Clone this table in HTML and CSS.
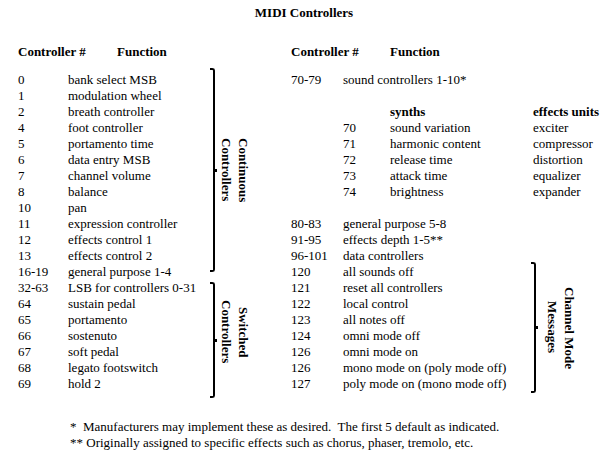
FILE: index.html
```html
<!DOCTYPE html>
<html>
<head>
<meta charset="utf-8">
<title>MIDI Controllers</title>
<link rel="stylesheet" href="styles.css">
</head>
<body>
<div class="page">
  <h1 class="title">MIDI Controllers</h1>
  <div class="tables">
    <section class="side side-left">
      <div class="head"><span class="hnum">Controller #</span><span>Function</span></div>
      <div class="grid lgrid">
        <div class="group g1">
          <div class="brace"><i class="cap-top"></i><i class="seg"></i><i class="tip"></i><i class="seg"></i><i class="cap-bot"></i></div>
          <div class="vlabel">Continuous<br>Controllers</div>
        </div>
        <div class="group g2">
          <div class="brace"><i class="cap-top"></i><i class="seg"></i><i class="tip"></i><i class="seg"></i><i class="cap-bot"></i></div>
          <div class="vlabel lab2">Switched<br>Controllers</div>
        </div>
        <span class="n">0</span><span class="f">bank select MSB</span>
        <span class="n">1</span><span class="f">modulation wheel</span>
        <span class="n">2</span><span class="f">breath controller</span>
        <span class="n">4</span><span class="f">foot controller</span>
        <span class="n">5</span><span class="f">portamento time</span>
        <span class="n">6</span><span class="f">data entry MSB</span>
        <span class="n">7</span><span class="f">channel volume</span>
        <span class="n">8</span><span class="f">balance</span>
        <span class="n">10</span><span class="f">pan</span>
        <span class="n">11</span><span class="f">expression controller</span>
        <span class="n">12</span><span class="f">effects control 1</span>
        <span class="n">13</span><span class="f">effects control 2</span>
        <span class="n">16-19</span><span class="f">general purpose 1-4</span>
        <span class="n">32-63</span><span class="f">LSB for controllers 0-31</span>
        <span class="n">64</span><span class="f">sustain pedal</span>
        <span class="n">65</span><span class="f">portamento</span>
        <span class="n">66</span><span class="f">sostenuto</span>
        <span class="n">67</span><span class="f">soft pedal</span>
        <span class="n">68</span><span class="f">legato footswitch</span>
        <span class="n">69</span><span class="f">hold 2</span>
      </div>
    </section>
    <section class="side side-right">
      <div class="head"><span class="hnum">Controller #</span><span>Function</span></div>
      <div class="grid rgrid">
        <div class="group g3">
          <div class="brace"><i class="cap-top"></i><i class="seg"></i><i class="tip"></i><i class="seg"></i><i class="cap-bot"></i></div>
          <div class="vlabel lab3">Channel Mode<br>Messages</div>
        </div>
        <span class="n">70-79</span><span class="f3">sound controllers 1-10*</span>
        <div class="blank"></div>
        <b class="c3">synths</b><b class="c4">effects units</b>
        <span class="c2">70</span><span class="c3">sound variation</span><span class="c4">exciter</span>
        <span class="c2">71</span><span class="c3">harmonic content</span><span class="c4">compressor</span>
        <span class="c2">72</span><span class="c3">release time</span><span class="c4">distortion</span>
        <span class="c2">73</span><span class="c3">attack time</span><span class="c4">equalizer</span>
        <span class="c2">74</span><span class="c3">brightness</span><span class="c4">expander</span>
        <div class="blank"></div>
        <span class="n">80-83</span><span class="f3">general purpose 5-8</span>
        <span class="n">91-95</span><span class="f3">effects depth 1-5**</span>
        <span class="n">96-101</span><span class="f3">data controllers</span>
        <span class="n">120</span><span class="f2">all sounds off</span>
        <span class="n">121</span><span class="f2">reset all controllers</span>
        <span class="n">122</span><span class="f2">local control</span>
        <span class="n">123</span><span class="f2">all notes off</span>
        <span class="n">124</span><span class="f2">omni mode off</span>
        <span class="n">126</span><span class="f2">omni mode on</span>
        <span class="n">126</span><span class="f2">mono mode on (poly mode off)</span>
        <span class="n">127</span><span class="f2">poly mode on (mono mode off)</span>
      </div>
    </section>
  </div>
  <div class="notes">
    <p>*  Manufacturers may implement these as desired.  The first 5 default as indicated.</p>
    <p>** Originally assigned to specific effects such as chorus, phaser, tremolo, etc.</p>
  </div>
</div>
</body>
</html>
```
FILE: styles.css
```css
html, body {
  margin: 0;
  padding: 0;
  background: #fff;
}

body {
  font-family: "Liberation Serif", "Times New Roman", serif;
  font-size: 13px;
  line-height: 16px;
  color: #000;
}

.page {
  width: 612px;
  padding-top: 5px;
}

.title {
  margin: 0;
  font-size: 13px;
  line-height: 16px;
  font-weight: bold;
  text-align: center;
  padding-right: 4px;
}

.tables {
  display: flex;
  margin-top: 23px;
}

.side-left {
  width: 273px;
  padding-left: 18px;
}

.side-right {
  flex: 1;
}

.head {
  display: flex;
  font-weight: bold;
  height: 16px;
  margin-bottom: 12px;
}

.hnum {
  width: 99px;
}

.grid {
  display: grid;
  grid-auto-rows: 16px;
  white-space: nowrap;
}

.lgrid {
  grid-template-columns: 50px 142px 8px 1fr;
}

.rgrid {
  grid-template-columns: 52px 47px 143px 1fr;
}

.lgrid .n { grid-column: 1; }
.lgrid .f { grid-column: 2; }

.rgrid .n { grid-column: 1; }
.rgrid .f3 { grid-column: 2 / span 3; }
.rgrid .f2 { grid-column: 2 / span 2; }
.rgrid .c2 { grid-column: 2; }
.rgrid .c3 { grid-column: 3; }
.rgrid .c4 { grid-column: 4; }
.rgrid .blank { grid-column: 1 / -1; }

.group {
  display: flex;
  align-items: center;
}

.g1 {
  grid-column: 3 / 5;
  grid-row: 1 / span 13;
  margin-top: -4px;
  margin-bottom: 8px;
}

.g2 {
  grid-column: 3 / 5;
  grid-row: 14 / span 7;
  margin-top: 2px;
  margin-bottom: -6px;
}

.g3 {
  grid-column: 4;
  grid-row: 13 / span 8;
  margin-top: -2px;
  margin-bottom: -1px;
  margin-left: -2px;
}

.brace {
  align-self: stretch;
  display: flex;
  flex-direction: column;
  width: 8px;
  flex: none;
}

.brace i {
  display: block;
  box-sizing: border-box;
}

.brace .seg {
  flex: 1;
  width: 5px;
  border-right: 2px solid #000;
}

.brace .cap-top {
  height: 3px;
  width: 5px;
  border-top: 2px solid #000;
  border-right: 2px solid #000;
  border-top-right-radius: 3px;
}

.brace .cap-bot {
  height: 3px;
  width: 5px;
  border-bottom: 2px solid #000;
  border-right: 2px solid #000;
  border-bottom-right-radius: 3px;
}

.brace .tip {
  height: 3px;
  width: 7px;
  border-left: 3px solid transparent;
  background: #000;
  background-clip: padding-box;
}

.vlabel {
  writing-mode: vertical-rl;
  font-weight: bold;
  line-height: 17px;
  text-align: center;
  white-space: nowrap;
}

.lab2 {
  margin-bottom: 16px;
}

.lab3 {
  margin-left: 5px;
}

.notes {
  margin-top: 27px;
  padding-left: 70px;
}

.notes p {
  margin: 0;
  white-space: pre;
}
```
